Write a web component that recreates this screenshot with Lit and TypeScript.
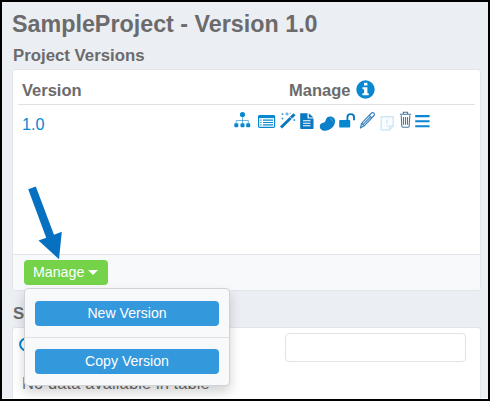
import { LitElement, html, svg, css } from "lit";
import { customElement } from "lit/decorators.js";

@customElement("app-root")
export class AppRoot extends LitElement {
  static styles = css`
    :host { display: block; }
    * { box-sizing: border-box; }
    .frame {
      width: 490px; height: 401px; overflow: hidden; position: relative;
      border: 2px solid #000; background: #ebeff4; color: #6b6b6b;
      font-family: "Liberation Sans", Arial, sans-serif;
      padding: 10px 7px 0 10px; display: flex; flex-direction: column;
      box-shadow: inset 0 -1px #fff;
    }
    h1, h2 { flex: none; }
    h1 { margin: 0; font-size: 23.3px; line-height: 24px; height: 34px; white-space: nowrap; }
    h2 { margin: 0 0 0 1px; font-size: 16.8px; line-height: 20px; height: 23px; white-space: nowrap; }
    .card { background: #fff; border: 1px solid #e1e4e8; border-radius: 3px; width: 469px; flex: none; }
    .versions { height: 222px; display: flex; flex-direction: column; }
    .head { height: 35px; margin: 0 5px; padding: 9px 0 0 4px; border-bottom: 1px solid #dfe1e3; display: flex; font-size: 16.5px; font-weight: bold; line-height: 22px; }
    .name { width: 267px; }
    .info { width: 19px; height: 19px; margin: 1px 0 0 6px; }
    .row { flex: 1; padding-left: 9px; display: flex; align-items: flex-start; }
    .link { color: #0788d1; font-size: 16.2px; line-height: 20px; padding-top: 9px; width: 211px; }
    .icons { width: 197px; height: 22px; margin-top: 6px; }
    .foot { height: 36px; border-top: 1px solid #e1e4e8; background: #f7f9fb; padding: 5px 0 0 11px; position: relative; border-radius: 0 0 3px 3px; }
    button { border: 0; padding: 0; font: 14.2px/25px "Liberation Sans", Arial, sans-serif; color: #fff; border-radius: 4px; display: block; }
    .manage { width: 84px; height: 25px; background: #74d348; display: flex; align-items: center; padding-left: 9px; }
    .caret { border: 5px solid transparent; border-top-color: #fff; border-bottom: 0; margin-left: 4px; }
    .menu { position: absolute; left: 11px; top: 33px; width: 206px; height: 98px; background: #f7f9fb; border: 1px solid #d0d2d5; border-radius: 4px; box-shadow: 0 6px 12px rgba(0,0,0,.18); z-index: 2; }
    .item { height: 48px; padding: 12px 10px 0; }
    .item + .item { border-top: 1px solid #dfe1e4; padding-top: 11px; }
    .item button { width: 184px; height: 25px; background: #3498dc; font-size: 14.1px; }
    .section { margin-top: 13px; height: 23px; }
    .table { height: 80px; padding: 5px 14px 0 9px; }
    .tools { display: flex; justify-content: space-between; height: 29px; align-items: flex-start; }
    .refresh { width: 16px; height: 16px; margin: 4px 0 0 -4px; }
    input { width: 181px; height: 29px; border: 1px solid #e1e3e5; border-radius: 4px; background: #fff; margin: 0; }
    .empty { font-size: 16.5px; line-height: 20px; margin-top: 11px; letter-spacing: .1px; white-space: nowrap; }
    .arrow { position: absolute; left: 24px; top: 180px; width: 40px; height: 78px; z-index: 3; }
  `;

  icons() {
    return svg`
      <g fill="#0788d1">
        <circle cx="9.5" cy="3.5" r="2.6"/><rect x="1.3" y="12.3" width="4" height="4" rx=".8"/><rect x="7.5" y="12.3" width="4" height="4" rx=".8"/><rect x="13.2" y="12.3" width="4" height="4" rx=".8"/>
        <path d="M9.5 5.5v7M3.3 12.5v-3h12v3" fill="none" stroke="#0788d1" stroke-width="1" opacity=".6"/>
      </g>
      <rect x="25.6" y="4.6" width="16" height="11.8" rx="1.2" fill="#fff" stroke="#0788d1" stroke-width="1.2"/>
      <path d="M25.5 4.5h16.2v2.6H25.5z" fill="#0788d1"/>
      <path d="M27.3 9.2h1.3m-1.3 2.3h1.3m-1.3 2.3h1.3M30 9.2h10M30 11.5h10M30 13.8h10" stroke="#0788d1" stroke-width="1.2"/>
      <path d="M48 16.5 61.5 3.2" stroke="#0b78bd" stroke-width="2.9"/>
      <path d="M57 5.8l2 2" stroke="#d7edf9" stroke-width="1"/>
      <path d="M49.5 2.1v2m-1-1h2M54 1.3v3.4m-1.7-1.7h3.4M49.5 6.5v2m-1-1h2M61.3 8.1v2m-1-1h2M57.2 1.7v1" stroke="#4c9fd0" stroke-width="1"/>
      <path d="M67.2 2.2h7.3v5.2h6V17.2q0 .8-.8.8H68q-.8 0-.8-.8z M75.8 2.2l4.7 4.2h-4.7z" fill="#0878c0"/>
      <path d="M70 9.8h7.5M70 12.3h7.5M70 14.8h7.5" stroke="#fff" stroke-width="1.1"/>
      <path d="M94.4 6.3c2-1.5 5.1-1.1 6.6.8 1.9 2.4 1.2 6.3-1.2 9-2.6 2.9-7 4.4-10 3.4-2.5-.8-3.6-3.4-2.8-5.4.9-2.2 2.6-2 4.2-2.6 1.7-.7 1.1-3.6 3.2-5.2z" fill="#0b7fc8"/>
      <path d="M97.2 7.6q2.3.3 2.5 2.8" stroke="#4fa6db" stroke-width="1" fill="none"/>
      <rect x="106.2" y="9" width="11" height="7.6" rx=".8" fill="#0788d1"/>
      <path d="M114.4 9.5V6.3q0-3.2 3.3-3.2t3.3 3.2v3" fill="none" stroke="#0878c0" stroke-width="1.9"/>
      <g fill="#fff" stroke="#3b83c0" stroke-width="1.2" stroke-linejoin="round">
        <path d="M127.4 17l1.2-4.7L138.5 2q1.3-.9 2.4.2 1 1.1.2 2.3l-9.9 10.3z"/><path d="M128.6 12.3l2.6 2.5M136.3 4.3l2.6 2.6M130.2 13.3l7.5-7.7" fill="none"/>
      </g>
      <path d="M148.2 5.7h12v9.3l-3.8 4h-8.2zM160 15h-3.6v3.8M154 8.3v4.2M154 14v1.5" fill="#fafdff" stroke="#cfe8f7" stroke-width="1.4"/>
      <path d="M168.2 4.2l.6 11.1q.1.9 1 .9h5.4q.9 0 1-.9l.6-11.1M166.9 3.3h11.2M170.4 3V1.3h4.2V3M170.5 6v7.8M172.5 6v7.8M174.5 6v7.8" fill="none" stroke="#46799f" stroke-width="1.1"/>
      <path d="M182.2 5.1h14.4M182.2 10.2h14.4M182.2 15.3h14.4" stroke="#0788d1" stroke-width="2.1"/>
    `;
  }

  render() {
    return html`
      <main class="frame">
        <h1>SampleProject - Version 1.0</h1>
        <h2>Project Versions</h2>
        <section class="card versions">
          <div class="head">
            <span class="name">Version</span><span>Manage</span>
            <svg class="info" viewBox="0 0 19 19"><circle cx="9.5" cy="9.5" r="9.2" fill="#0788d1"/><path d="M8 2.8h3.4v2.8H8zM6.5 7.2h4.9v6h1.3v2H6.4v-2h1.7v-4H6.5z" fill="#fff"/></svg>
          </div>
          <div class="row">
            <span class="link">1.0</span>
            <svg class="icons" viewBox="0 0 197 22">${this.icons()}</svg>
          </div>
          <div class="foot">
            <button class="manage">Manage<span class="caret"></span></button>
            <div class="menu">
              <div class="item"><button>New Version</button></div>
              <div class="item"><button>Copy Version</button></div>
            </div>
          </div>
        </section>
        <h2 class="section">S</h2>
        <section class="card table">
          <div class="tools">
            <svg class="refresh" viewBox="0 0 16 16"><path d="M13.6 5A6 6 0 1 0 14 8.8M14 1.5V5.5H10" fill="none" stroke="#0788d1" stroke-width="2"/></svg>
            <input aria-label="Search">
          </div>
          <div class="empty">No data available in table</div>
        </section>
        <svg class="arrow" viewBox="0 0 40 78"><path d="M2.2 7.2L9.8 4.4 28 52.7l7.8-3-2.8 27.5L12.5 58.6l7.7-2.9z" fill="#0870c0"/></svg>
      </main>
    `;
  }
}
